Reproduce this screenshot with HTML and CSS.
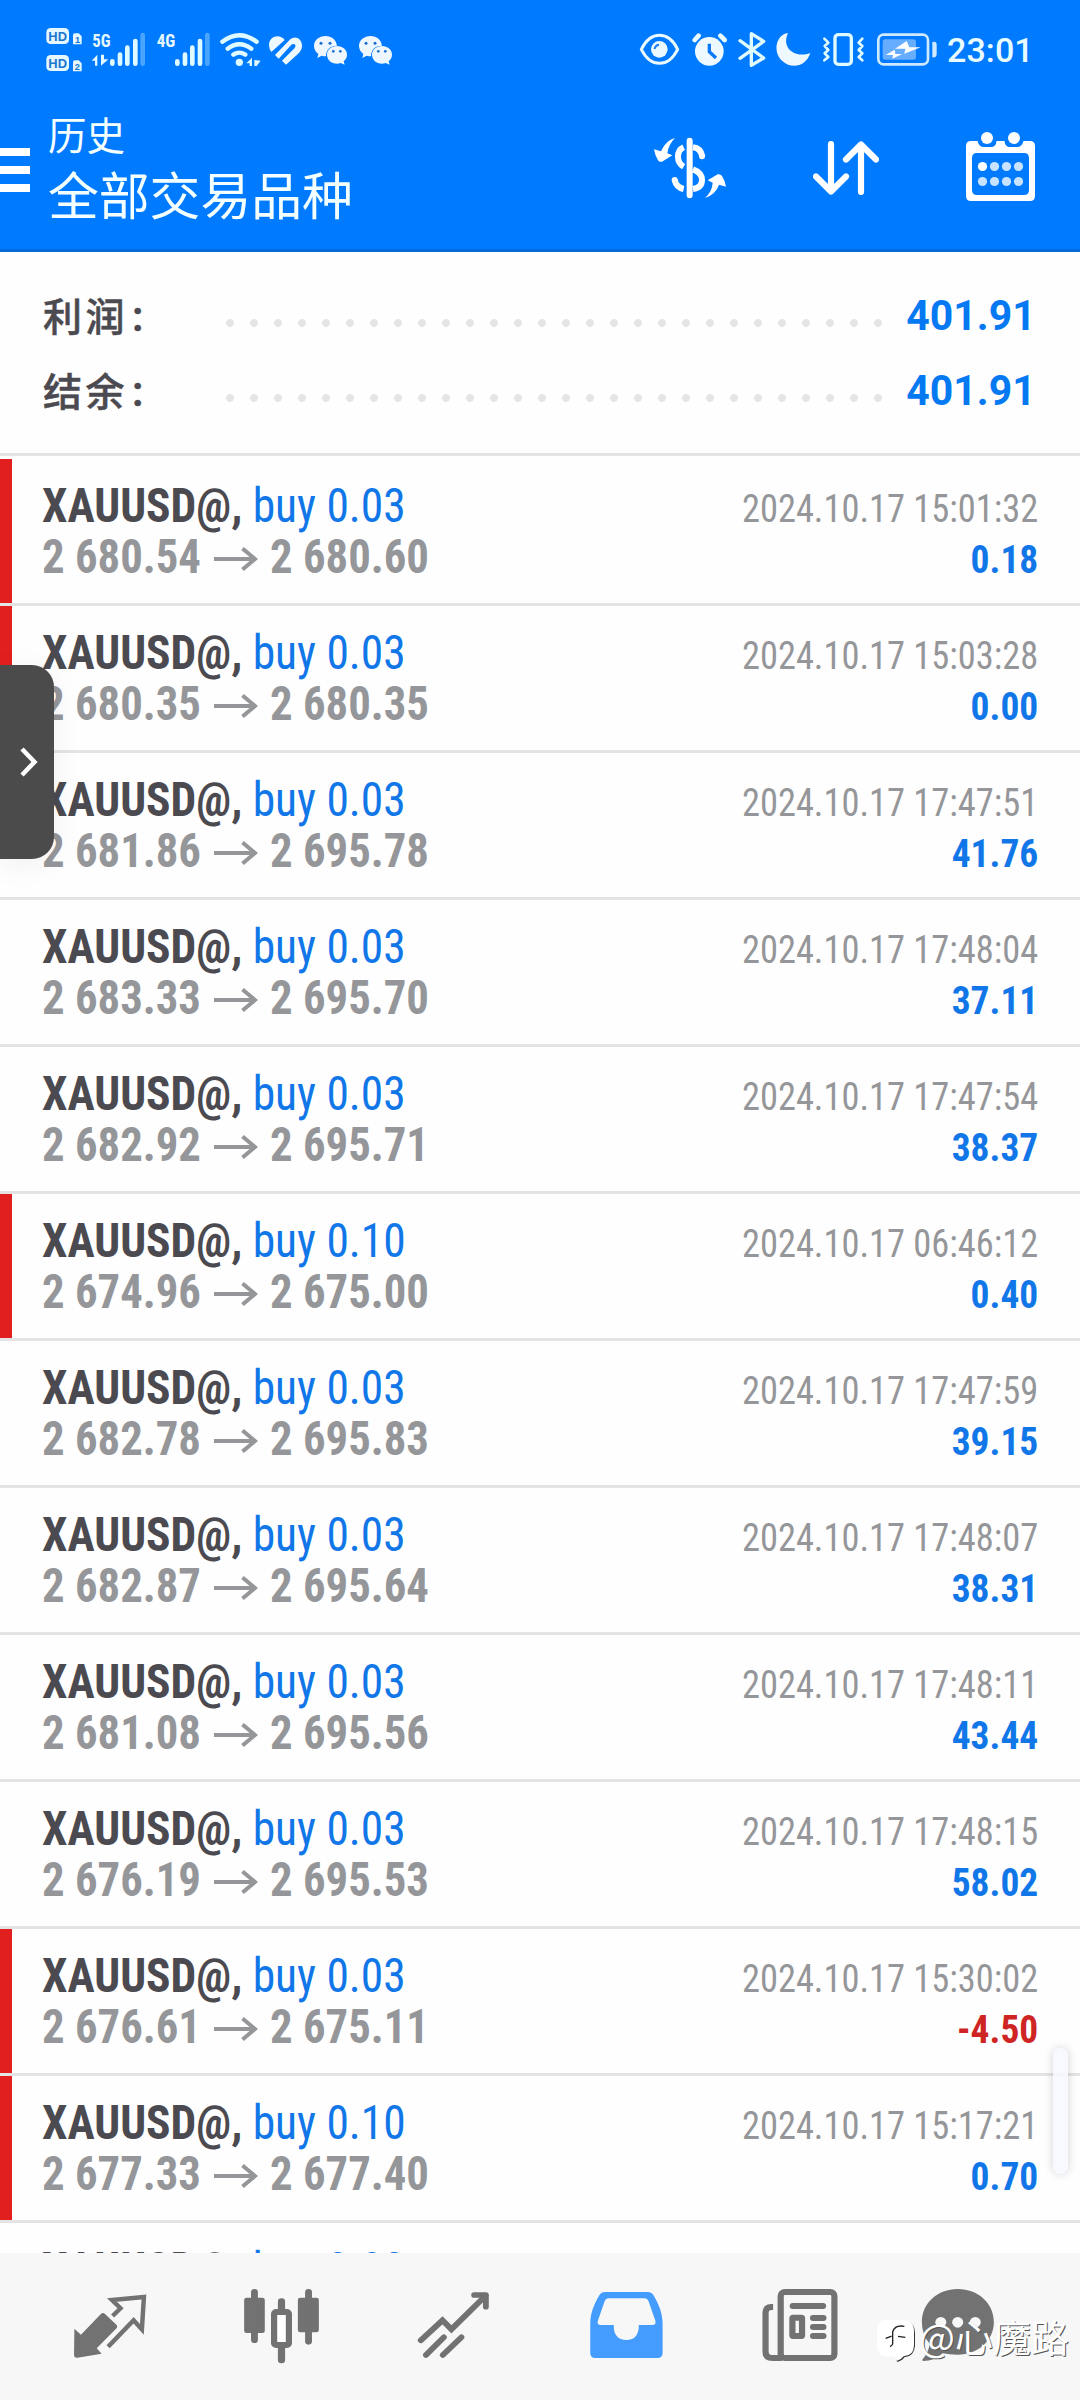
FILE: index.html
```html
<!DOCTYPE html>
<html lang="zh-CN">
<head>
<meta charset="utf-8">
<title>历史</title>
<link rel="stylesheet" href="styles.css">
</head>
<body>
<svg class="defs" width="0" height="0">
  <symbol id="arrow" viewBox="0 0 44 24"><path d="M0 12H41M28.500 1.500L41 12L28.500 22.500" fill="none" stroke="#959699" stroke-width="4"/></symbol>
  <symbol id="chat-pair" viewBox="0 0 100 90">
    <path d="M36 1C16 1 1 14 1 31c0 10 5 18 13 24l-3 12 13-7c4 1 8 2 13 2C37 42 50 30 70 30C67 12 54 1 36 1Z" fill="#eef7ff"/>
    <path d="M70 31c-17 0-30 11-30 26s13 27 30 27c4 0 8-1 11-2l12 5-3-10c6-5 10-12 10-20C100 42 87 31 70 31Z" fill="#eef7ff"/>
    <g fill="#1c6fd0"><circle cx="22" cy="23" r="4.500"/><circle cx="49" cy="23" r="4.500"/><circle cx="59" cy="47" r="4"/><circle cx="80" cy="47" r="4"/></g>
  </symbol>
</svg>
<div class="screen">
<header class="header">
  <div class="status">
    <svg class="status-left" viewBox="0 30 540 180">
      <g fill="#e6f8ff">
        <rect x="49" y="54" width="68" height="48" rx="13"/><rect x="49" y="135" width="68" height="48" rx="13"/>
        <path d="M129 76q0-6 6-6h11l9 9v24h-26zM129 157q0-6 6-6h11l9 9v24h-26z"/>
      </g>
      <g fill="#1a77cf" class="hd"><text x="55" y="92" font-size="37" textLength="56" lengthAdjust="spacingAndGlyphs">HD</text><text x="55" y="173" font-size="37" textLength="56" lengthAdjust="spacingAndGlyphs">HD</text><text x="135" y="100" font-size="28">1</text><text x="134" y="181" font-size="28">2</text></g>
      <g fill="#e6f8ff" class="net"><text x="187" y="110" font-size="57" textLength="55" lengthAdjust="spacingAndGlyphs">5G</text><text x="380" y="110" font-size="57" textLength="56" lengthAdjust="spacingAndGlyphs">4G</text></g>
      <path d="M185 152L202 134V167H195V152ZM213 134V167L235 148H222V134Z" fill="#e6f8ff"/>
      <g stroke="#e0fbff" stroke-width="14" stroke-linecap="round">
        <path d="M247 154V161M270 134V161M292 113V161M316 93V161M442 154V161M465 134V161M487 113V161M510 93V161"/>
        <path d="M338 75V161M532 75V161" stroke="#4aa5ff"/>
      </g>
    </svg>
    <svg class="status-mid" viewBox="0 0 600 180">
      <g fill="none" stroke="#e0fbff" stroke-width="13" stroke-linecap="round">
        <path d="M37 65Q88 26 140 65M53 86Q88 60 124 86M70 104Q88 92 106 104"/>
      </g>
      <circle cx="88" cy="127" r="11" fill="#e0fbff"/>
      <path d="M109 130L126 113V138H119V130ZM133 120L152 122L140 138H133Z" fill="#e0fbff"/>
      <path d="M177 75C177 48 210 40 224 60L184 96Q177 88 177 75ZM195 105L238 61C252 44 276 54 276 77C276 91 267 99 257 108L228 134L216 122L254 84Q259 77 254 73Q249 70 244 74L206 116Z" fill="#eef9ff"/>
      <use href="#chat-pair" x="311" y="47" width="100" height="90"/>
      <use href="#chat-pair" x="446" y="47" width="100" height="90"/>
    </svg>
    <svg class="status-right" viewBox="0 0 930 180">
      <path d="M34 88C62 32 115 32 143 88C115 144 62 144 34 88Z" fill="none" stroke="#eafaff" stroke-width="9"/>
      <circle cx="88" cy="88" r="25" fill="#eafaff"/><path d="M74 87Q75 76 87 74" fill="none" stroke="#1a80f5" stroke-width="6"/>
      <circle cx="238" cy="94" r="43" fill="#eef9ff"/><path d="M194 60L206 47M271 47L284 60" stroke="#eafaff" stroke-width="14" stroke-linecap="round"/><path d="M238 71V95L258 114" fill="none" stroke="#0a79f5" stroke-width="10"/>
      <path d="M330 62L401 114L364 136V41L401 64L330 115" fill="none" stroke="#e0fbff" stroke-width="10" stroke-linejoin="round" stroke-linecap="round"/>
      <path d="M474 39C437 44 428 96 456 122C487 151 529 137 541 99C491 116 454 82 474 39Z" fill="#eef9ff"/>
      <rect x="615" y="44" width="49" height="89" rx="10" fill="none" stroke="#e0fbff" stroke-width="10"/>
      <path d="M583 56L595 68L584 78L595 90L584 100L595 111L583 121M697 56L686 68L697 78L686 90L697 100L686 111L697 121" fill="none" stroke="#e0fbff" stroke-width="8" stroke-linejoin="round" stroke-linecap="round"/>
      <rect x="745" y="44" width="149" height="89" rx="16" fill="none" stroke="#cfeaff" stroke-width="8"/>
      <rect x="758" y="58" width="100" height="61" rx="8" fill="#66adff"/>
      <path d="M907 66Q920 62 920 74V102Q920 114 907 112Z" fill="#cfeaff"/>
      <path d="M830 63L795 86H826L823 101L872 82H838ZM794 89L767 105H789L787 116L817 102H796Z" fill="#fff"/>
    </svg>
    <span class="clock">23:01</span>
  </div>
  <div class="bar">
    <svg class="menu" viewBox="0 0 30 44"><path d="M0 4H30M0 22H30M0 40H30" stroke="#fff" stroke-width="8"/></svg>
    <div class="titles"><div class="subtitle">历史</div><h1 class="title">全部交易品种</h1></div>
    <div class="actions">
      <svg class="ic-rates" viewBox="0 0 300 270">
        <g fill="none" stroke="#fff" stroke-width="18">
          <path d="M149 62V226" stroke-linecap="round"/>
          <path d="M131 82Q114 90 114 110Q114 130 131 140M131 207Q109 202 104 180"/>
          <path d="M159 82Q182 84 187 110M159 148Q186 158 186 180Q186 203 159 207"/>
        </g>
        <circle cx="104" cy="180" r="9" fill="#fff"/><circle cx="186" cy="109" r="9" fill="#fff"/>
        <path d="M105 54Q85 74 82 100L97 106L66 125Q58 127 54 121Q45 108 42 88L63 94Q77 61 105 54Z" fill="#fff"/>
        <path d="M195 234Q217 213 218 188L203 181L233 163Q241 161 246 168Q256 184 258 200L237 194Q228 222 195 234Z" fill="#fff"/>
      </svg>
      <svg class="ic-sort" viewBox="0 0 66 54"><path d="M18 3V50M3 35.500L18 50.500L33 35.500M48 51V4M33 18.500L48 3.500L63 18.500" fill="none" stroke="#fff" stroke-width="6.200" stroke-linecap="round" stroke-linejoin="round"/></svg>
      <svg class="ic-cal" viewBox="0 0 69 70">
        <path d="M5 9H11.500Q13 15 18 15H25Q30 15 30.500 9H38.500Q39 15 44 15H51Q56 15 57.500 9H64Q69 9 69 14V64Q69 69 64 69H5Q0 69 0 64V14Q0 9 5 9ZM11 21Q6 21 6 26V58Q6 63 11 63H58Q63 63 63 58V26Q63 21 58 21Z" fill="#fff" fill-rule="evenodd"/>
        <circle cx="21" cy="6" r="6" fill="#fff"/><circle cx="48" cy="6" r="6" fill="#fff"/>
        <g fill="#c8e3ff"><circle cx="16.500" cy="34.500" r="4.600" fill="#fff"/><circle cx="28.500" cy="34.500" r="4.600"/><circle cx="40.500" cy="34.500" r="4.600"/><circle cx="52.500" cy="34.500" r="4.600"/><circle cx="16.500" cy="49.500" r="4.600"/><circle cx="28.500" cy="49.500" r="4.600"/><circle cx="40.500" cy="49.500" r="4.600"/><circle cx="52.500" cy="49.500" r="4.600"/></g>
      </svg>
    </div>
  </div>
</header>
<section class="summary">
  <div class="sum-row"><span class="sum-label">利润<span class="colon">:</span></span><span class="dots"></span><span class="sum-value">401.91</span></div>
  <div class="sum-row"><span class="sum-label">结余<span class="colon">:</span></span><span class="dots"></span><span class="sum-value">401.91</span></div>
</section>
<main class="list">
  <div class="row flag"><div class="deal"><div class="name"><b>XAUUSD@,</b> buy 0.03</div><div class="prices"><span>2 680.54</span><svg><use href="#arrow"/></svg><span>2 680.60</span></div></div><div class="info"><div class="date">2024.10.17 15:01:32</div><div class="profit">0.18</div></div></div>
  <div class="row flag"><div class="deal"><div class="name"><b>XAUUSD@,</b> buy 0.03</div><div class="prices"><span>2 680.35</span><svg><use href="#arrow"/></svg><span>2 680.35</span></div></div><div class="info"><div class="date">2024.10.17 15:03:28</div><div class="profit">0.00</div></div></div>
  <div class="row"><div class="deal"><div class="name"><b>XAUUSD@,</b> buy 0.03</div><div class="prices"><span>2 681.86</span><svg><use href="#arrow"/></svg><span>2 695.78</span></div></div><div class="info"><div class="date">2024.10.17 17:47:51</div><div class="profit">41.76</div></div></div>
  <div class="row"><div class="deal"><div class="name"><b>XAUUSD@,</b> buy 0.03</div><div class="prices"><span>2 683.33</span><svg><use href="#arrow"/></svg><span>2 695.70</span></div></div><div class="info"><div class="date">2024.10.17 17:48:04</div><div class="profit">37.11</div></div></div>
  <div class="row"><div class="deal"><div class="name"><b>XAUUSD@,</b> buy 0.03</div><div class="prices"><span>2 682.92</span><svg><use href="#arrow"/></svg><span>2 695.71</span></div></div><div class="info"><div class="date">2024.10.17 17:47:54</div><div class="profit">38.37</div></div></div>
  <div class="row flag"><div class="deal"><div class="name"><b>XAUUSD@,</b> buy 0.10</div><div class="prices"><span>2 674.96</span><svg><use href="#arrow"/></svg><span>2 675.00</span></div></div><div class="info"><div class="date">2024.10.17 06:46:12</div><div class="profit">0.40</div></div></div>
  <div class="row"><div class="deal"><div class="name"><b>XAUUSD@,</b> buy 0.03</div><div class="prices"><span>2 682.78</span><svg><use href="#arrow"/></svg><span>2 695.83</span></div></div><div class="info"><div class="date">2024.10.17 17:47:59</div><div class="profit">39.15</div></div></div>
  <div class="row"><div class="deal"><div class="name"><b>XAUUSD@,</b> buy 0.03</div><div class="prices"><span>2 682.87</span><svg><use href="#arrow"/></svg><span>2 695.64</span></div></div><div class="info"><div class="date">2024.10.17 17:48:07</div><div class="profit">38.31</div></div></div>
  <div class="row"><div class="deal"><div class="name"><b>XAUUSD@,</b> buy 0.03</div><div class="prices"><span>2 681.08</span><svg><use href="#arrow"/></svg><span>2 695.56</span></div></div><div class="info"><div class="date">2024.10.17 17:48:11</div><div class="profit">43.44</div></div></div>
  <div class="row"><div class="deal"><div class="name"><b>XAUUSD@,</b> buy 0.03</div><div class="prices"><span>2 676.19</span><svg><use href="#arrow"/></svg><span>2 695.53</span></div></div><div class="info"><div class="date">2024.10.17 17:48:15</div><div class="profit">58.02</div></div></div>
  <div class="row flag"><div class="deal"><div class="name"><b>XAUUSD@,</b> buy 0.03</div><div class="prices"><span>2 676.61</span><svg><use href="#arrow"/></svg><span>2 675.11</span></div></div><div class="info"><div class="date">2024.10.17 15:30:02</div><div class="profit loss">-4.50</div></div></div>
  <div class="row flag"><div class="deal"><div class="name"><b>XAUUSD@,</b> buy 0.10</div><div class="prices"><span>2 677.33</span><svg><use href="#arrow"/></svg><span>2 677.40</span></div></div><div class="info"><div class="date">2024.10.17 15:17:21</div><div class="profit">0.70</div></div></div>
  <div class="row"><div class="deal"><div class="name"><b>XAUUSD@,</b> buy 0.03</div></div></div>
</main>
<nav class="tabs">
  <svg viewBox="69.700 159 499.500 441" preserveAspectRatio="none"><path d="M216 386L235 404L293 342Q299 336 305 342L338 374Q343 380 337 386L281 445L295 461L225 473Q215 474 215 464Z" fill="#727272"/><path d="M327 348L350 325L325 300L418 291L412 388L388 361L314 440" fill="none" stroke="#727272" stroke-width="13"/></svg>
  <svg viewBox="569.200 159 499.500 441" preserveAspectRatio="none"><g fill="#727272"><rect x="709" y="293" width="60" height="106" rx="7"/><rect x="865" y="293" width="61" height="104" rx="7"/><rect x="729" y="267" width="20" height="162" rx="10"/><rect x="886" y="267" width="20" height="167" rx="10"/><rect x="807" y="295" width="21" height="50" rx="10"/><rect x="807" y="430" width="21" height="60" rx="10"/></g><rect x="796" y="336" width="43" height="99" rx="6" fill="#fff" stroke="#727272" stroke-width="18"/></svg>
  <svg viewBox="1068.700 159 499.500 441" preserveAspectRatio="none"><g fill="none" stroke="#727272" stroke-width="17" stroke-linecap="round"><path d="M1222 421L1285 361L1311 388L1410 287"/><path d="M1377 285H1411V320" stroke-linejoin="round"/><path d="M1237 465L1289 412M1286 465L1340 412" /></g></svg>
  <svg viewBox="0 759 499.500 441" preserveAspectRatio="none"><path d="M189 876H313Q325 876 331 888C347 916 356 943 356 970V1059Q356 1074 341 1074H161Q146 1074 146 1059V970C146 943 155 916 171 888Q177 876 189 876ZM199 895Q191 895 188 903L168 962Q165 975 176 975H214Q214 1020 251 1020Q287 1020 287 975H326Q338 975 335 962L315 903Q312 895 304 895Z" fill="#449cff" fill-rule="evenodd"/></svg>
  <svg viewBox="499.500 759 499.500 441" preserveAspectRatio="none"><g fill="none" stroke="#727272" stroke-width="18"><rect x="699" y="876" width="156" height="198" rx="12"/><path d="M677 921H672Q655 921 655 940V1055Q655 1074 676 1074H703"/><rect x="733" y="953" width="28" height="55" rx="2"/><path d="M734 918H822M793 954H823M793 981H823M793 1008H823" stroke-linecap="round"/></g></svg>
  <svg viewBox="999 759 499.500 441" preserveAspectRatio="none"><path d="M1213 867C1272 867 1318 909 1318 966C1318 1022 1272 1064 1213 1064Q1188 1064 1169 1060Q1148 1083 1112 1083Q1108 1080 1114 1074Q1127 1059 1132 1032Q1109 1005 1109 966C1109 909 1155 867 1213 867Z" fill="#727272"/><g fill="#f7f7f7"><circle cx="1164" cy="967" r="16"/><circle cx="1213" cy="967" r="16"/><circle cx="1264" cy="967" r="16"/></g></svg>
</nav>
<div class="handle"><svg viewBox="0 0 18 30"><path d="M2 2L14.500 15L2 28" fill="none" stroke="#fff" stroke-width="4.500"/></svg></div>
<div class="thumb"></div>
<div class="mark"><svg viewBox="0 0 120 140"><path d="M90 7H92Q117 12 117 42V80Q115 112 85 115Q80 125 64 129Q61 124 60 120Z" fill="#333"/><path d="M28 3H83Q114 3 114 38V78Q114 110 83 112Q76 122 62 126Q60 117 54 112H36Q3 112 3 78V40Q3 3 28 3Z" fill="#fff"/><path d="M85 22Q57 17 50 38V75Q47 81 42 83M29 58L47 51M66 52L88 55" fill="none" stroke="#222" stroke-width="4"/></svg><span>@心魔路</span></div>
</div>
</body>
</html>
```
FILE: styles.css
```css
* { box-sizing: border-box; }
body { margin: 0; background: #fff; font-family: Roboto, "Noto Sans CJK SC", sans-serif; }
svg { display: block; flex: none; }
.defs { position: absolute; }
.screen { position: relative; width: 1080px; height: 2400px; overflow: hidden; display: flex; flex-direction: column; background: #fefefe; }

.header { height: 252px; flex: none; background: #007aff; border-bottom: 3px solid #056cda; display: flex; flex-direction: column; }
.status { height: 100px; padding: 20px 0 0 30px; display: flex; }
.status-left { width: 180px; height: 60px; }
.status-mid { width: 200px; height: 60px; }
.status-right { width: 310px; height: 60px; margin-left: 220px; }
.hd { font-family: "Liberation Sans"; font-weight: 700; }
.net { font-family: "Roboto Condensed", Roboto; font-weight: 700; }
.clock { margin-left: 7px; color: #e8fbff; font-size: 34px; font-weight: 500; line-height: 60px; letter-spacing: .1px; }
.bar { flex: 1; display: flex; align-items: flex-start; }
.menu { width: 30px; height: 44px; margin-top: 48px; }
.titles { margin: 9px 0 0 18px; width: 401px; color: #f4ffff; font-family: "Noto Sans CJK SC", sans-serif; }
.subtitle { font-size: 38.500px; line-height: 48px; }
.title { margin: 3px 0 0; font-size: 50.800px; line-height: 66px; font-weight: 400; }
.actions { display: flex; margin-left: 191px; }
.ic-rates { width: 100px; height: 90px; margin-top: 20px; }
.ic-sort { width: 66px; height: 54px; margin: 41px 0 0 73px; }
.ic-cal { width: 69px; height: 70px; margin: 32px 0 0 87px; }

.summary { height: 204px; flex: none; padding: 26px 44px 0 42px; border-bottom: 3px solid #e4e4e4; }
.sum-row { display: flex; height: 75px; line-height: 75px; }
.sum-label { width: 176px; padding: 1px 0 0 1px; color: #4b4a50; font-size: 39px; font-weight: 500; letter-spacing: 3.500px; -webkit-text-stroke: .5px #4b4a50; }
.colon { margin-left: 4px; font-size: 42px; font-weight: 600; }
.dots { width: 672px; height: 8px; margin-top: 41px; background: radial-gradient(circle at 12px 4px, #e5e5e5 3.600px, transparent 4.300px) 0 0 / 24px 8px repeat-x; }
.sum-value { margin-left: auto; color: #0579f2; font-size: 42px; font-weight: 700; transform: scaleX(.975); transform-origin: right; }

.list { flex: 1; min-height: 0; overflow: hidden; padding-top: 3px; }
.row { height: 147px; padding: 21px 42px 0; display: flex; justify-content: space-between; border-bottom: 3px solid #e4e4e4; font-family: "Roboto Condensed", Roboto, sans-serif; line-height: 51px; white-space: nowrap; }
.flag { background: linear-gradient(#e21f1f, #e21f1f) 0 0 / 12px 100% no-repeat padding-box; }
.deal { font-size: 48px; }
.name { color: #1177e8; font-weight: 430; transform: scaleX(.947); transform-origin: left; }
.name b { color: #4b4a50; font-weight: 700; }
.prices { display: flex; color: #959699; font-weight: 700; }
.prices span { width: 172px; transform: scaleX(.932); transform-origin: left; }
.prices svg { width: 44px; height: 24px; margin: 16px 12px 0 0; }
.info { padding-top: 4px; text-align: right; font-size: 39px; }
.date { color: #959699; font-weight: 420; transform: scaleX(.934); transform-origin: right; }
.profit { color: #1177e8; font-weight: 700; transform: scaleX(.96); transform-origin: right; }
.loss { color: #cf2424; }

.tabs { height: 147px; flex: none; padding-left: 24px; display: flex; background: #f7f7f7; }
.tabs svg { width: 172px; height: 147px; }

.handle { position: absolute; left: 0; top: 665px; width: 54px; height: 194px; background: #4b4b4b; border-radius: 0 22px 22px 0; box-shadow: 0 6px 30px rgba(0,0,0,.06); }
.handle svg { width: 18px; height: 30px; margin: 82px 0 0 20px; }
.thumb { position: absolute; left: 1053px; top: 2048px; width: 15px; height: 126px; border-radius: 8px; background: rgba(246,248,255,.85); box-shadow: 0 0 10px rgba(0,0,0,.18); }
.mark { position: absolute; left: 876px; top: 2319px; display: flex; color: #fff; }
.mark svg { width: 40px; height: 46.700px; }
.mark span { margin-left: 3px; font: 38px/34px "Noto Sans CJK SC", sans-serif; text-shadow: 1px 1px 0 #555; }
```
